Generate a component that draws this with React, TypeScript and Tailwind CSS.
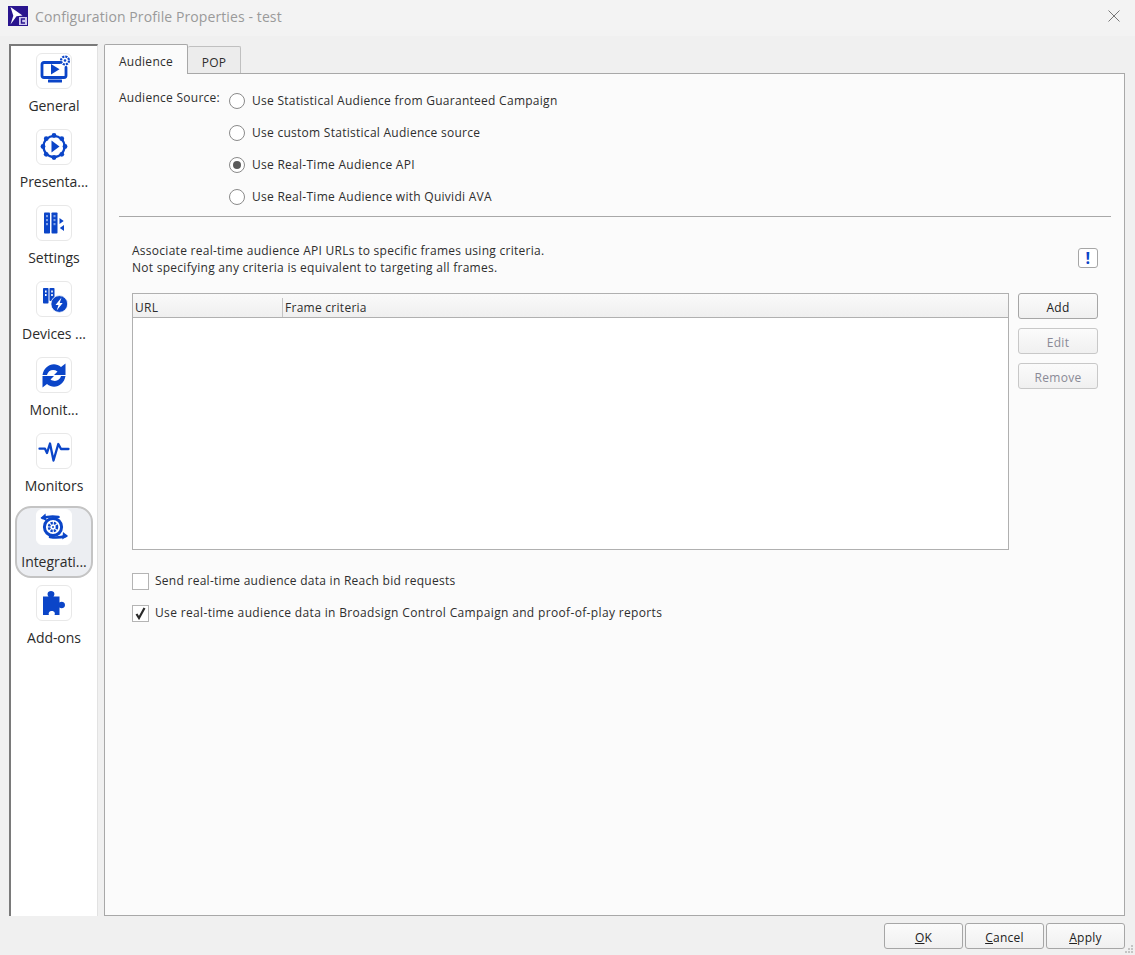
import type { ReactNode } from 'react';

const BLUE = '#0b45c8';

function GeneralIcon() {
  return (
    <svg width="36" height="36" viewBox="0 0 36 36" className="shrink-0">
      <path d="M24 9.500H8c-1.200 0-2 .8-2 2v11c0 1.200.8 2 2 2h20c1.200 0 2-.8 2-2v-8" fill="none" stroke={BLUE} strokeWidth="2.800" strokeLinecap="round" />
      <path d="M15 11v10.500l8.500-5.200z" fill={BLUE} />
      <rect x="12" y="26.500" width="14" height="3" rx="0.500" fill={BLUE} />
      <circle cx="29" cy="7.500" r="4" fill="none" stroke={BLUE} strokeWidth="2.200" strokeDasharray="2.200 0.900" />
      <circle cx="29" cy="7.500" r="1.300" fill={BLUE} />
    </svg>
  );
}

function PresentationIcon() {
  const dots = [0, 45, 90, 135, 180, 225, 270, 315];
  return (
    <svg width="36" height="36" viewBox="0 0 36 36" className="shrink-0">
      <circle cx="18" cy="17.500" r="10.500" fill="none" stroke={BLUE} strokeWidth="2.200" />
      {dots.map((a) => (
        <circle key={a} cx={18 + 11 * Math.cos((a * Math.PI) / 180)} cy={17.5 + 11 * Math.sin((a * Math.PI) / 180)} r="2.400" fill={BLUE} />
      ))}
      <path d="M15.500 11.500v12l8-6z" fill={BLUE} />
    </svg>
  );
}

function SettingsIcon() {
  return (
    <svg width="36" height="36" viewBox="0 0 36 36" className="shrink-0">
      <rect x="8" y="7.500" width="6" height="21" rx="0.800" fill={BLUE} />
      <rect x="15.500" y="7.500" width="6" height="21" rx="0.800" fill={BLUE} />
      {[10, 14, 18].map((y) => (
        <g key={y}>
          <rect x="10" y={y} width="2" height="2.200" fill="#7f9fe6" />
          <rect x="17.500" y={y} width="2" height="2.200" fill="#7f9fe6" />
        </g>
      ))}
      <path d="M23.500 13v6l4.200-3z" fill={BLUE} />
      <path d="M28 20v6l-4.200-3z" fill={BLUE} />
    </svg>
  );
}

function DevicesIcon() {
  return (
    <svg width="36" height="36" viewBox="0 0 36 36" className="shrink-0">
      <rect x="7" y="7" width="5.500" height="15.500" rx="0.800" fill={BLUE} />
      <rect x="13.500" y="7" width="5" height="13" rx="0.800" fill={BLUE} />
      <rect x="9" y="9.500" width="1.600" height="2" fill="#fff" />
      <rect x="9" y="13" width="1.600" height="2" fill="#fff" />
      <rect x="15.200" y="9.500" width="1.600" height="2" fill="#fff" />
      <rect x="15.200" y="13" width="1.600" height="2" fill="#fff" />
      <circle cx="23.300" cy="23" r="8.400" fill={BLUE} stroke="#fff" strokeWidth="0.800" />
      <path d="M25.500 16.500l-6 7.500h3l-1.800 5.500 6-7.500h-3z" fill="#fff" />
    </svg>
  );
}

function MonitoringIcon() {
  const arrow = 'M6.500 18C8 8.500 18 4 25 10l4.500-3.500V18H18l3.500-3.500c-4.500-3-9.500-1-10.500 3.500z';
  return (
    <svg width="36" height="36" viewBox="0 0 36 36" className="shrink-0">
      <path d={arrow} fill={BLUE} />
      <path d={arrow} fill={BLUE} transform="rotate(180 18 18.500)" />
    </svg>
  );
}

function MonitorsIcon() {
  return (
    <svg width="36" height="36" viewBox="0 0 36 36" className="shrink-0">
      <path d="M3.500 15.700H9l2 4.300 3-9.500 3.500 17 4.800-16.500 2.700 5h7.500" fill="none" stroke={BLUE} strokeWidth="2.300" strokeLinejoin="round" strokeLinecap="round" />
    </svg>
  );
}

function IntegrationsIcon() {
  return (
    <svg width="36" height="36" viewBox="0 0 36 36" className="shrink-0">
      <circle cx="17" cy="18" r="8.600" fill="none" stroke={BLUE} strokeWidth="3" />
      <circle cx="17" cy="18" r="4" fill="none" stroke={BLUE} strokeWidth="2.600" strokeDasharray="2.200 1" />
      <circle cx="17" cy="18" r="1" fill={BLUE} />
      <path d="M6.500 9c5-1.500 10-2 16-1" fill="none" stroke={BLUE} strokeWidth="2.600" strokeLinecap="round" />
      <path d="M4.500 9l5-4.500 1 7.500z" fill={BLUE} />
      <path d="M30 27c-5 1.500-10 2-16 1" fill="none" stroke={BLUE} strokeWidth="2.600" strokeLinecap="round" />
      <path d="M32 27l-5-4-.8 7.500z" fill={BLUE} />
    </svg>
  );
}

function AddonsIcon() {
  return (
    <svg width="36" height="36" viewBox="0 0 36 36" className="shrink-0">
      <path d="M7 11.500h5.500c-1.500-1.500-1.500-5.500 2.500-5.500s4 4 2.500 5.500h6v6c1.500-1.300 5.500-1 5.500 2.500s-4 3.800-5.500 2.500v7.500h-5c.8-1.500.3-4-2.700-4s-3.500 2.500-2.800 4H7z" fill={BLUE} />
    </svg>
  );
}

const NAV_ITEMS = [
  { label: 'General', icon: <GeneralIcon /> },
  { label: 'Presenta...', icon: <PresentationIcon /> },
  { label: 'Settings', icon: <SettingsIcon /> },
  { label: 'Devices ...', icon: <DevicesIcon /> },
  { label: 'Monit...', icon: <MonitoringIcon /> },
  { label: 'Monitors', icon: <MonitorsIcon /> },
  { label: 'Integrati...', icon: <IntegrationsIcon />, selected: true },
  { label: 'Add-ons', icon: <AddonsIcon /> },
];

function NavItem({ label, icon, selected }: { label: string; icon: ReactNode; selected?: boolean }) {
  return (
    <div
      className={`flex h-[72px] w-[78px] flex-col items-center pt-[1px] mb-[4px] rounded-[16px] border-2 ${
        selected ? 'border-[#c4c4c4] bg-[#eceef2]' : 'border-transparent'
      }`}
    >
      <div className={`flex h-[36px] w-[36px] shrink-0 items-center justify-center rounded-[6px] border ${selected ? 'border-white bg-white' : 'border-[#e8e8e8] bg-white'}`}>
        {icon}
      </div>
      <div className="mt-[7px] whitespace-nowrap text-[14px] leading-[20px] tracking-[-0.05px] text-[#2b2b2b]">{label}</div>
    </div>
  );
}

function Radio({ label, checked }: { label: string; checked?: boolean }) {
  return (
    <div className="flex h-[32px] items-center">
      <div className="flex h-[16px] w-[16px] items-center justify-center rounded-full border border-[#8a8a8a] bg-white">
        {checked && <div className="h-[8px] w-[8px] rounded-full bg-[#5a5a5a]" />}
      </div>
      <span className="ml-[7px]">{label}</span>
    </div>
  );
}

function Checkbox({ label, checked, className }: { label: string; checked?: boolean; className?: string }) {
  return (
    <div className="flex h-[32px] items-center">
      <div className="flex h-[17px] w-[17px] items-center justify-center border border-[#b4b4b4] bg-white">
        {checked && (
          <svg width="13" height="13" viewBox="0 0 13 13">
            <path d="M2.500 7l2.500 4 5.500-10" fill="none" stroke="#2a2a2a" strokeWidth="2.200" />
          </svg>
        )}
      </div>
      <span className={`ml-[6px] ${className ?? ''}`}>{label}</span>
    </div>
  );
}

function Button({ children, disabled, className }: { children: ReactNode; disabled?: boolean; className?: string }) {
  return (
    <button
      className={`flex h-[26px] items-center justify-center rounded-[3px] border bg-gradient-to-b from-[#fbfbfb] to-[#f0f0f0] pt-[4px] ${
        disabled ? 'border-[#c8c8c8] text-[#8a8a96]' : 'border-[#a6a6a6] text-[#222]'
      } ${className ?? ''}`}
    >
      {children}
    </button>
  );
}

export default function App() {
  return (
    <div className="flex h-[955px] w-[1135px] flex-col overflow-hidden bg-[#f0f0f0] font-['Open_Sans',sans-serif] text-[12px] tracking-[0.27px] text-[#2e2e2e]">
      <div className="flex h-[36px] shrink-0 items-center bg-[#f3f3f3] pb-[4px] pl-[8px] pr-[15px]">
        <svg width="20" height="20" viewBox="0 0 20 20">
          <rect width="20" height="20" fill="#2a158f" />
          <path d="M2.500 1l12 8.500-6 .8-6 8.200 2.800-8.800z" fill="#fff" />
          <rect x="11" y="11" width="8" height="8" fill="#cfc8ee" />
          <path d="M17 13h-3.500v4H17" fill="none" stroke="#2a158f" strokeWidth="1.400" />
        </svg>
        <span className="ml-[7px] text-[14px] tracking-[0.1px] text-[#9a9a9a]">Configuration Profile Properties - test</span>
        <svg width="12" height="12" viewBox="0 0 12 12" className="ml-auto">
          <path d="M0.500 0.500l11 11M11.500 0.500l-11 11" stroke="#777" strokeWidth="1" />
        </svg>
      </div>

      <div className="flex min-h-0 flex-1 pl-[9px] pr-[10px] pt-[8px]">
        <div className="flex w-[89px] shrink-0 flex-col items-start border-t-2 border-r border-l-2 border-t-[#7a7a7a] border-l-[#7a7a7a] border-r-[#e2e2e2] bg-white pl-[4px] pt-[4px]">
          {NAV_ITEMS.map((item) => (
            <NavItem key={item.label} {...item} />
          ))}
        </div>

        <div className="ml-[6px] flex min-w-0 flex-1 flex-col">
          <div className="relative z-10 flex h-[30px] items-end">
            <div className="flex h-[30px] w-[84px] items-center justify-center rounded-t-[2px] border border-b-0 border-[#a8a8a8] bg-[#fbfbfb] pt-[4px]">Audience</div>
            <div className="mb-[1px] flex h-[27px] w-[53px] items-center justify-center rounded-t-[2px] border border-l-0 border-b-0 border-[#c0c0c0] bg-[#ececec] pt-[6px]">POP</div>
          </div>
          <div className="-mt-px h-[843px] border border-[#a8a8a8] bg-[#fbfbfb] pl-[14px] pr-[13px] pt-[11px]">
            <div className="flex">
              <div className="w-[110px] shrink-0 pt-[1px] leading-[24px]">Audience Source:</div>
              <div>
                <Radio label="Use Statistical Audience from Guaranteed Campaign" />
                <Radio label="Use custom Statistical Audience source" />
                <Radio label="Use Real-Time Audience API" checked />
                <Radio label="Use Real-Time Audience with Quividi AVA" />
              </div>
            </div>
            <div className="mt-[3px] h-px bg-[#a8a8a8]" />

            <div className="mt-[25px] flex items-start pl-[13px]">
              <div className="leading-[17px]">
                <div>Associate real-time audience API URLs to specific frames using criteria.</div>
                <div>Not specifying any criteria is equivalent to targeting all frames.</div>
              </div>
              <div className="ml-auto mr-[13px] mt-[6px] flex h-[20px] w-[20px] items-center justify-center rounded-[3px] border border-[#a6a6a6] bg-white text-[16px] font-bold leading-none text-[#0b45c8]">!</div>
            </div>

            <div className="mt-[17px] flex pl-[13px]">
              <div className="h-[257px] w-[877px] border border-[#b0b0b0] bg-white">
                <div className="flex h-[24px] border-b border-[#b0b0b0] bg-gradient-to-b from-[#fafafa] to-[#efefef] pt-[4px]">
                  <div className="flex w-[150px] items-center border-r border-[#c4c4c4] pl-[2px]">URL</div>
                  <div className="flex items-center pl-[2px]">Frame criteria</div>
                </div>
              </div>
              <div className="ml-[9px] flex flex-col gap-[9px]">
                <Button className="w-[80px]">Add</Button>
                <Button className="w-[80px]" disabled>Edit</Button>
                <Button className="w-[80px]" disabled>Remove</Button>
              </div>
            </div>

            <div className="mt-[15px] pl-[13px]">
              <Checkbox label="Send real-time audience data in Reach bid requests" />
              <Checkbox label="Use real-time audience data in Broadsign Control Campaign and proof-of-play reports" checked className="tracking-[0.345px]" />
            </div>
          </div>
        </div>
      </div>

      <div className="relative flex h-[39px] shrink-0 items-start justify-end gap-[2px] pr-[10px] pt-[7px]">
        <Button className="w-[79px]"><span className="underline">O</span>K</Button>
        <Button className="w-[79px]"><span className="underline">C</span>ancel</Button>
        <Button className="w-[79px]"><span className="underline">A</span>pply</Button>
        <svg width="10" height="10" viewBox="0 0 10 10" className="absolute bottom-[1px] right-[1px]">
          <g fill="#c4c4c4">
            <rect x="7" y="1" width="2" height="2" />
            <rect x="4" y="4" width="2" height="2" />
            <rect x="7" y="4" width="2" height="2" />
            <rect x="1" y="7" width="2" height="2" />
            <rect x="4" y="7" width="2" height="2" />
            <rect x="7" y="7" width="2" height="2" />
          </g>
        </svg>
      </div>
    </div>
  );
}
